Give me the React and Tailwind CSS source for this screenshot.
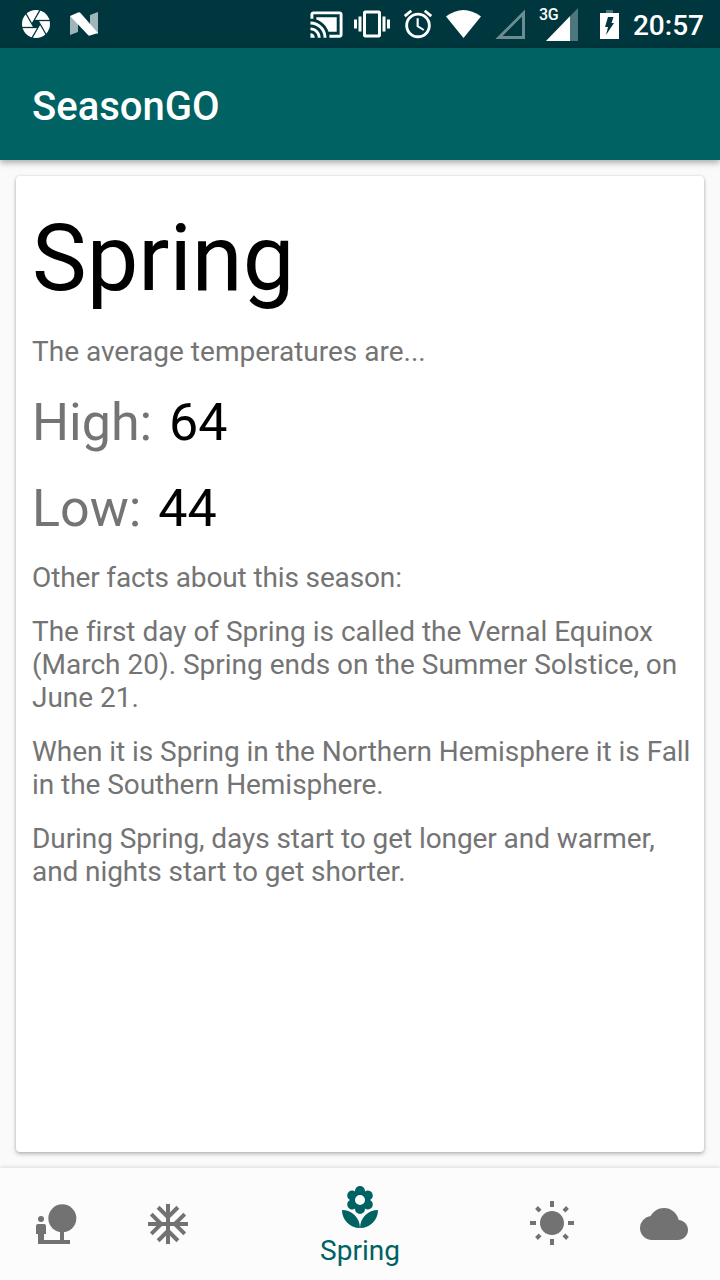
import { MdCastConnected, MdVibration, MdAlarm, MdAcUnit, MdLocalFlorist, MdWbSunny, MdCloud } from "react-icons/md";

function Shutter() {
  return (
    <svg className="size-7" viewBox="-14 -14 28 28">
      <circle r="14" fill="#fff" />
      <path d="M-2 -3.500H2L4 0L2 3.500H-2L-4 0Z" fill="#00363d" />
      <g stroke="#00363d" strokeWidth="1.300">
        {[0, 60, 120, 180, 240, 300].map((angle) => (
          <path key={angle} d="M-15 3.500H2" transform={`rotate(${angle})`} />
        ))}
      </g>
    </svg>
  );
}

function PersonAndTree({ className }) {
  return (
    <svg className={className} viewBox="0 0 24 24" fill="currentColor">
      <circle cx="15.170" cy="9.170" r="7" />
      <circle cx="4.500" cy="9.500" r="1.500" />
      <path d="M14 15H16V20H19V22H3V17H2V13Q2 12 3 12H6Q7 12 7 13V17H6V20H14Z" />
    </svg>
  );
}

function StatusBar() {
  return (
    <div className="flex h-12 items-center justify-between bg-[#00363d] pr-4 pl-[22px] text-white">
      <div className="flex items-center gap-5">
        <Shutter />
        <svg className="h-6 w-7" viewBox="0 0 28 24">
          <path d="M0 4L8 9V20L0 23Z M20 3L28 0V22L20 18Z" fill="#9fb5b9" />
          <path d="M0 4L8 .5Q9.500 0 10.500 1L28 21L20 23.500Q19 24 18 23Z" fill="#fff" />
        </svg>
      </div>
      <div className="flex items-center">
        <MdCastConnected className="size-[35px]" />
        <MdVibration className="ml-[10px] size-9" />
        <MdAlarm className="ml-[11px] size-[34px]" />
        <svg className="ml-[11px] h-7 w-[35px]" viewBox="0 0 35 28">
          <path d="M0 6.500Q17.500-6.500 35 6.500L17.500 28Z" fill="#fff" />
        </svg>
        <svg className="ml-[14px] h-[31px] w-[31px]" viewBox="0 0 31 31">
          <path d="M4 28.500H28.500V4Z" fill="none" stroke="#6b8d92" strokeWidth="3" />
        </svg>
        <div className="relative ml-[20px] h-[33px] w-8">
          <svg className="h-[33px] w-8" viewBox="0 0 32 33">
            <path d="M0 33L32 0V33Z" fill="#4d777c" />
            <path d="M0 33L24 8.250V33Z" fill="#fff" />
          </svg>
          <span className="absolute -top-[1px] -left-[7px] text-[16px] leading-4 font-medium tracking-[-0.2px]">3G</span>
        </div>
        <svg className="ml-[22px] h-[29px] w-[19px]" viewBox="0 0 19 29">
          <path d="M6 0H13V3H6Z" fill="#4d777c" />
          <path d="M0 3H19V29H0Z" fill="#fff" />
          <path d="M8 7H13.500L11.500 13H14L6 25L8 17H5Z" fill="#00363d" />
        </svg>
        <span className="ml-[14px] pt-[3px] text-[28px] leading-[33px] font-medium">20:57</span>
      </div>
    </div>
  );
}

const facts = [
  ["The first day of Spring is called the Vernal Equinox (March 20). Spring ends on the Summer Solstice, on June 21.", "tracking-[-0.01px]"],
  ["When it is Spring in the Northern Hemisphere it is Fall in the Southern Hemisphere.", "tracking-[-0.05px]"],
  ["During Spring, days start to get longer and warmer, and nights start to get shorter.", "tracking-[-0.08px]"],
];

function Temperature({ label, value }) {
  return (
    <p className="text-[52px] leading-[61px]">
      {label}: <span className="ml-1 text-black">{value}</span>
    </p>
  );
}

function SeasonCard() {
  return (
    <section className="mx-4 h-[976px] rounded-[4px] bg-white pt-[29px] pr-2 pl-4 text-[28px] leading-[33px] text-[#747474] shadow-[0_2px_4px_rgba(0,0,0,0.27),0_0_2px_rgba(0,0,0,0.15)]">
      <h2 className="text-[92px] leading-[108px] text-black">Spring</h2>
      <p className="mt-[22px] mb-6">The average temperatures are...</p>
      <Temperature label="High" value="64" />
      <div className="h-[25px]" />
      <Temperature label="Low" value="44" />
      <p className="mt-[22px] tracking-[-0.13px]">Other facts about this season:</p>
      {facts.map(([fact, tracking]) => (
        <p key={fact} className={`mt-[21px] ${tracking}`}>{fact}</p>
      ))}
    </section>
  );
}

function NavItem({ icon: Icon, label }) {
  return (
    <button aria-label={label} className="flex w-28 items-center justify-center text-[#727272]">
      <Icon className="size-12" />
    </button>
  );
}

export default function App() {
  return (
    <main className="flex h-[1280px] w-[720px] flex-col bg-[#fafafa] font-[Roboto,sans-serif]">
      <StatusBar />
      <header className="flex h-28 items-center bg-[#006262] pt-1 pl-8 text-white shadow-[0_3px_6px_rgba(0,0,0,0.3)]">
        <h1 className="text-[40px] leading-[47px] font-medium">SeasonGO</h1>
      </header>
      <div className="flex-1 pt-4">
        <SeasonCard />
      </div>
      <nav className="flex h-28 bg-[#fcfcfc] shadow-[0_-1px_4px_rgba(0,0,0,0.12)]">
        <NavItem icon={PersonAndTree} label="Fall" />
        <NavItem icon={MdAcUnit} label="Winter" />
        <button className="flex w-[272px] flex-col items-center pt-4 text-[#006262]">
          <MdLocalFlorist className="size-12" />
          <span className="mt-[2px] text-[28px] leading-[33px]">Spring</span>
        </button>
        <NavItem icon={MdWbSunny} label="Summer" />
        <NavItem icon={MdCloud} label="Weather" />
      </nav>
    </main>
  );
}
